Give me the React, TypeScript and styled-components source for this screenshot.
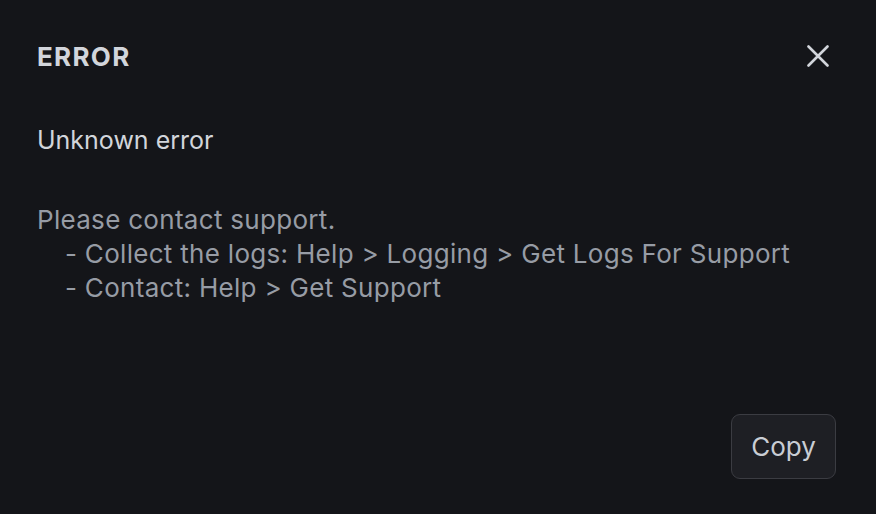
import styled, { createGlobalStyle } from "styled-components";

const GlobalStyle = createGlobalStyle`
  html, body {
    margin: 0;
    padding: 0;
    background: #141519;
  }
  body {
    font-family: Inter, "Noto Sans", sans-serif;
  }
`;

const Dialog = styled.div`
  width: 876px;
  height: 514px;
  box-sizing: border-box;
  background: #141519;
  padding: 36px 40px 36px 37px;
  display: flex;
  flex-direction: column;
`;

const Header = styled.div`
  display: flex;
  justify-content: space-between;
  align-items: center;
  height: 40px;
  padding-right: 6px;
`;

const Title = styled.h2`
  margin: 0;
  font-size: 26px;
  font-weight: 700;
  color: #d2d5db;
  letter-spacing: 1.3px;
`;

const CloseButton = styled.button`
  background: none;
  border: none;
  padding: 0;
  width: 24px;
  height: 24px;
  display: flex;
  align-items: center;
  justify-content: center;
  cursor: pointer;
  color: #d2d5db;
`;

const Message = styled.p`
  margin: 47px 0 0;
  font-size: 25px;
  line-height: 34px;
  color: #d2d5db;
`;

const Details = styled.pre`
  margin: 46px 0 0;
  font-family: inherit;
  font-size: 26px;
  letter-spacing: 0.3px;
  line-height: 34px;
  color: #979ca5;
  white-space: pre-wrap;
`;

const Indent = styled.span`
  display: inline-block;
  width: 28px;
`;

const Footer = styled.div`
  margin-top: auto;
  display: flex;
  justify-content: flex-end;
`;

const CopyButton = styled.button`
  width: 105px;
  height: 65px;
  margin-bottom: -1px;
  background: #1e1f24;
  border: 1.5px solid #3b3c42;
  border-radius: 9px;
  color: #c9cdd4;
  font-family: inherit;
  font-size: 26px;
  cursor: pointer;
`;

export default function App() {
  return (
    <>
      <GlobalStyle />
      <Dialog>
        <Header>
          <Title>ERROR</Title>
          <CloseButton aria-label="Close">
            <svg width="22" height="22" viewBox="0 0 22 22">
              <path
                d="M1.5 1.5 L20.5 20.5 M20.5 1.5 L1.5 20.5"
                stroke="currentColor"
                strokeWidth="2.6"
                strokeLinecap="round"
              />
            </svg>
          </CloseButton>
        </Header>
        <Message>Unknown error</Message>
        <Details>
          {"Please contact support.\n"}
          <Indent />
          {"- Collect the logs: Help > Logging > Get Logs For Support\n"}
          <Indent />
          {"- Contact: Help > Get Support"}
        </Details>
        <Footer>
          <CopyButton>Copy</CopyButton>
        </Footer>
      </Dialog>
    </>
  );
}
